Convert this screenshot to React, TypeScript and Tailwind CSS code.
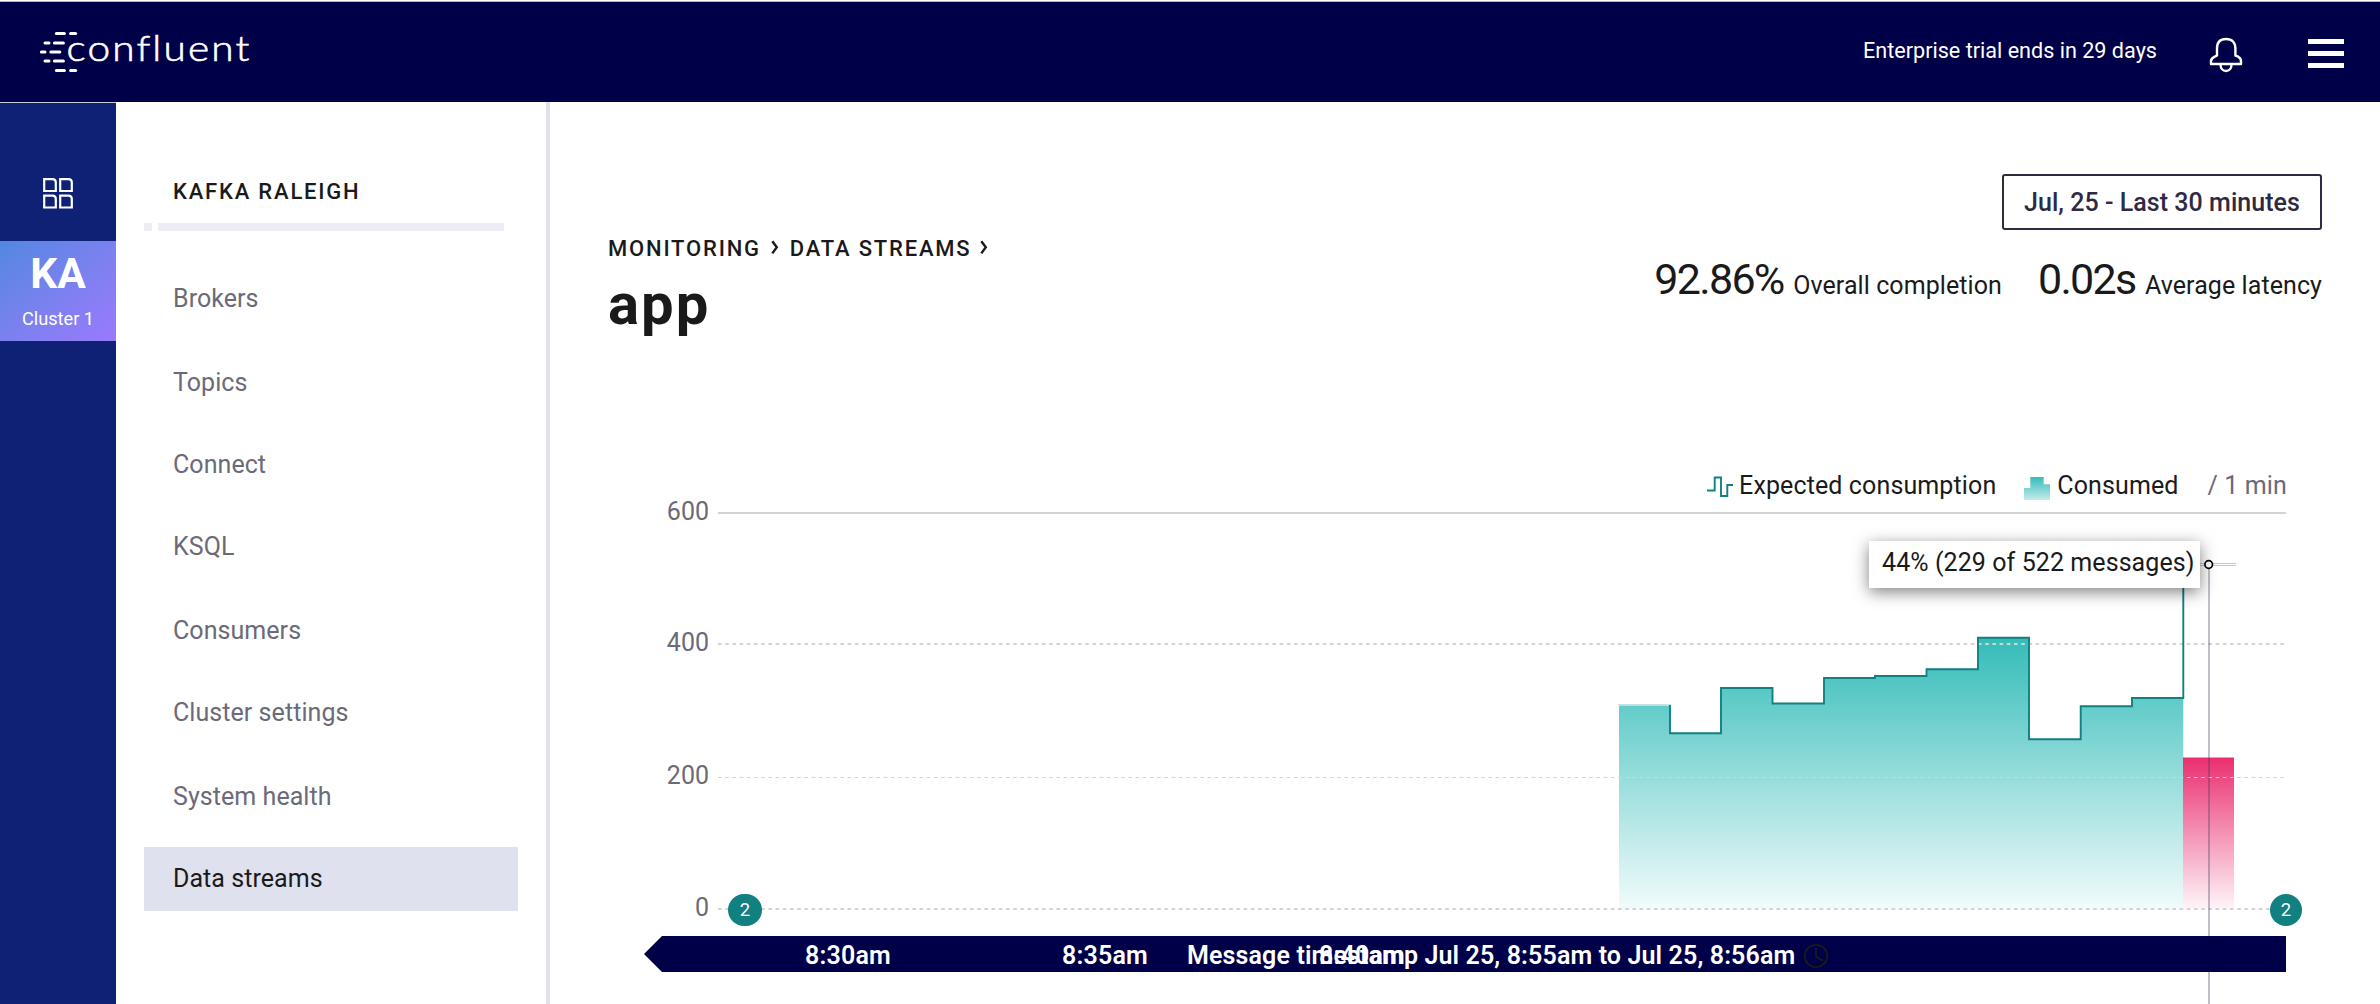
import type { ReactNode } from "react";

const NAV = [
  { label: "Brokers", gap: "mt-9" },
  { label: "Topics", gap: "mt-5" },
  { label: "Connect", gap: "mt-[18px]" },
  { label: "KSQL", gap: "mt-[18px]" },
  { label: "Consumers", gap: "mt-5" },
  { label: "Cluster settings", gap: "mt-[18px]" },
  { label: "System health", gap: "mt-5" },
  { label: "Data streams", gap: "mt-[18px]", active: true },
];

function Logo() {
  const dashes: [number, number, number][] = [
    [56.4, 64.4, 33.4], [70.6, 75.6, 33.4],
    [45, 49, 43], [54.4, 63.4, 43],
    [41.4, 45, 52], [50.8, 59.8, 52],
    [45, 49, 61], [54.4, 63.4, 61],
    [56.4, 64.4, 70.6], [70.6, 75.6, 70.6],
  ];
  return (
    <svg width="222" height="46" viewBox="38 29 222 46" className="overflow-visible" aria-label="confluent">
      {dashes.map(([a, b, y], i) => (
        <line key={i} x1={a} x2={b} y1={y} y2={y} stroke="#fff" strokeWidth="3" strokeLinecap="round" />
      ))}
      <text
        transform="translate(66.5 61) scale(1.16 1)"
        fill="#fff"
        stroke="#fff"
        strokeWidth="0.6"
        letterSpacing="1.85"
        className="font-[Lato,sans-serif] text-[35px] font-light [font-variant-ligatures:none]"
      >
        confluent
      </text>
    </svg>
  );
}

function BellIcon() {
  return (
    <svg width="34" height="36" viewBox="0 0 34 36" fill="none" stroke="#fff" strokeWidth="2.4" strokeLinejoin="round">
      <path d="M8 18.5V11.5C8 5.5 11 2 17 2s9.400 3.500 9.400 9.500V18.500C28.500 19.200 32 20.500 32 24v3H2v-3C2 20.500 6 19.800 8 18.500Z" />
      <path d="M11.500 27.500C11.500 31.500 14 34 17 34s5.500-2.500 5.500-6.500" />
    </svg>
  );
}

function GridIcon() {
  return (
    <svg width="31" height="31" viewBox="0 0 31 31" fill="none" stroke="#fff" strokeWidth="2.200">
      {[[0, 0], [16, 0], [0, 16.500], [16, 16.500]].map(([x, y], i) => (
        <path key={i} transform={`translate(${x} ${y})`} d="M1.200 1.200H9.500Q12.800 1.400 12.800 4.500V13H1.200Z" />
      ))}
    </svg>
  );
}

function Chevron() {
  return (
    <svg width="8" height="15" viewBox="0 0 8 15" className="mt-1" fill="none" stroke="#1a1a1a" strokeWidth="2.400">
      <path d="M1.300 1.200L5.800 7.300L1.300 13.400" />
    </svg>
  );
}

function Header() {
  return (
    <header className="flex h-[102px] items-start justify-between border-t border-white bg-[#000048] shadow-[inset_0_1px_0_#b4b9c0]">
      <div className="pt-7 pl-[38px]">
        <Logo />
      </div>
      <div className="flex items-start pr-9">
        <span className="mt-[37px] text-[21.6px] leading-[26px] text-white">Enterprise trial ends in 29 days</span>
        <div className="mt-9 ml-[52px]">
          <BellIcon />
        </div>
        <div className="mt-[38px] ml-[65px] flex w-9 flex-col gap-[7px]">
          <div className="h-[5px] bg-white" />
          <div className="h-[5px] bg-white" />
          <div className="h-[5px] bg-white" />
        </div>
      </div>
    </header>
  );
}

function Rail() {
  return (
    <div className="flex w-[116px] shrink-0 flex-col border-t border-[#c5cadb] bg-[#0f2175]">
      <div className="flex justify-center pt-[75px]">
        <GridIcon />
      </div>
      <div className="mt-8 flex h-[100px] flex-col items-center bg-linear-to-br from-[#5187e1] to-[#9a79fd] text-white">
        <span className="mt-2 text-[42.5px] leading-[50px] font-bold">KA</span>
        <span className="mt-[9px] text-[18.2px] leading-[22px]">Cluster 1</span>
      </div>
    </div>
  );
}

function Sidebar() {
  return (
    <aside className="w-[434px] shrink-0 border-r-4 border-[#dfe1ee] pt-[77px] pl-7">
      <h2 className="ml-[29px] text-[22px] leading-[25px] font-medium tracking-[1.8px] text-[#1a1a1a]">KAFKA RALEIGH</h2>
      <div className="mt-[19px] flex gap-1.5">
        <div className="h-2 w-2 bg-[#edeef5]" />
        <div className="h-2 w-[346px] bg-[#edeef5]" />
      </div>
      <nav className="w-[374px]">
        {NAV.map((n) => (
          <a
            key={n.label}
            className={`${n.gap} block h-16 pl-[29px] text-[25px] leading-[63px] tracking-[0.06px] ${
              n.active ? "bg-[#dfe1ee] text-[#1a1a1a]" : "text-[#6b6a78]"
            }`}
          >
            {n.label}
          </a>
        ))}
      </nav>
    </aside>
  );
}

function Stat({ value, children }: { value: string; children: ReactNode }) {
  return (
    <div className="flex items-baseline gap-[9.500px]">
      <span className="text-[43px] leading-[50px] tracking-[-1.700px]">{value}</span>
      <span className="text-[25px] leading-[29px] tracking-[0.080px]">{children}</span>
    </div>
  );
}

function PageHead() {
  return (
    <div className="flex h-[369px] items-start justify-between pr-[58px] pl-[58px] text-[#1a1a1a]">
      <div className="pt-[134px]">
        <div className="flex text-[22px] leading-[25px] font-medium tracking-[1.8px]">
          <span>MONITORING</span>
          <span className="ml-2.5"><Chevron /></span>
          <span className="ml-[11px]">DATA STREAMS</span>
          <span className="ml-[9px]"><Chevron /></span>
        </div>
        <h1 className="mt-[9px] text-[58px] leading-[68px] font-bold tracking-[2px]">app</h1>
      </div>
      <div className="flex flex-col items-end pt-[72px]">
        <button className="h-14 w-80 rounded-[3px] border-2 border-[#2f2a42] text-[25px] leading-[54px] font-medium tracking-[0.040px] text-[#2f2a42]">
          Jul, 25 - Last 30 minutes
        </button>
        <div className="mt-6 flex items-baseline gap-9">
          <Stat value="92.86%">Overall completion</Stat>
          <Stat value="0.02s">Average latency</Stat>
        </div>
      </div>
    </div>
  );
}

function Legend() {
  return (
    <div className="flex h-[29px] justify-end pr-[93px] text-[25px] leading-[29px] tracking-[0.12px] text-[#1a1a1a]">
      <svg width="26" height="21" viewBox="0 0 26 21" className="mt-[5px] mr-1.5" fill="none" stroke="#128080" strokeWidth="1.900">
        <path d="M0 14.500H7.700V1.500H14V20H20.300V9H26" />
      </svg>
      <span className="mr-7">Expected consumption</span>
      <svg width="26" height="23" viewBox="0 0 26 23" className="mt-1.5 mr-[7px]">
        <defs>
          <linearGradient id="legendFill" x1="0" y1="0" x2="0" y2="1">
            <stop offset="0" stopColor="#34bcb9" />
            <stop offset="1" stopColor="#c4ebea" />
          </linearGradient>
        </defs>
        <path d="M0 11H6.300V0H19.700V7.300H26V23H0Z" fill="url(#legendFill)" />
      </svg>
      <span className="mr-[29px]">Consumed</span>
      <span className="text-[#6b6878]">/ 1 min</span>
    </div>
  );
}

const STEP_X = [1619, 1670, 1721, 1772.5, 1824, 1875, 1926.5, 1978, 2029, 2080.7, 2132, 2183.3];
const STEP_Y = [705.5, 733.3, 688, 703.5, 678, 676, 669.3, 637.7, 739.3, 706.3, 698];

function areaPath() {
  let d = `M${STEP_X[0]} 909`;
  STEP_Y.forEach((y, i) => {
    d += `L${STEP_X[i]} ${y}L${STEP_X[i + 1]} ${y}`;
  });
  return `${d}L${STEP_X[STEP_X.length - 1]} 909Z`;
}

function outlinePath() {
  let d = `M${STEP_X[1]} 705`;
  STEP_Y.slice(1).forEach((y, i) => {
    d += `L${STEP_X[i + 1]} ${y}L${STEP_X[i + 2]} ${y}`;
  });
  return `${d}V564`;
}

function Badge({ x, w }: { x: number; w: number }) {
  return (
    <g>
      <rect x={x - w / 2} y="894" width={w} height="32" rx="16" fill="#128080" />
      <text x={x} y="916" textAnchor="middle" fill="#fff" fontSize="18.500">2</text>
    </g>
  );
}

function Chart() {
  return (
    <div className="relative ml-[90px] h-[504px] w-[1670px]">
      <svg width="1670" height="504" viewBox="640 500 1670 504" className="block overflow-visible font-[Roboto,sans-serif]">
        <defs>
          <linearGradient id="consumed" gradientUnits="userSpaceOnUse" x1="0" y1="638" x2="0" y2="909">
            <stop offset="0" stopColor="#34bcb9" />
            <stop offset="0.500" stopColor="#94dcda" />
            <stop offset="1" stopColor="#f2fbfb" />
          </linearGradient>
          <linearGradient id="missed" gradientUnits="userSpaceOnUse" x1="0" y1="757" x2="0" y2="909">
            <stop offset="0" stopColor="#ea2e6f" />
            <stop offset="1" stopColor="#fef5f9" />
          </linearGradient>
        </defs>

        <path d={areaPath()} fill="url(#consumed)" />
        <rect x="1618" y="704" width="53" height="1" fill="#c5e3e3" />
        <rect x="2183" y="757.500" width="51" height="151.500" fill="url(#missed)" />

        <rect x="718" y="512" width="1568" height="2" fill="#d3d3d3" />
        <g stroke="#d3d3d3" strokeDasharray="3.600 3.600">
          <line x1="718" x2="2286" y1="644" y2="644" strokeWidth="2" />
          <line x1="718" x2="2286" y1="777.500" y2="777.500" strokeWidth="1" />
          <line x1="718" x2="2286" y1="909" y2="909" strokeWidth="2" />
        </g>
        <path d={outlinePath()} fill="none" stroke="#128080" strokeWidth="1.900" />

        <g fill="#6b6a78" fontSize="25" textAnchor="end">
          <text x="709" y="520">600</text>
          <text x="709" y="651">400</text>
          <text x="709" y="784">200</text>
          <text x="709" y="916">0</text>
        </g>

        <rect x="2200" y="563" width="36" height="1" fill="#c8c3cc" />
        <rect x="2200" y="565" width="36" height="1" fill="#c8c3cc" />
        <rect x="2208" y="568" width="2" height="436" fill="#3b3550" fillOpacity="0.320" />
        <circle cx="2208.700" cy="564.500" r="3.800" fill="#fff" stroke="#000" strokeWidth="1.700" />

        <Badge x={745} w={34} />
        <Badge x={2286} w={32} />

        <path d="M644 954L662 936H2286V972H662Z" fill="#000048" />
        <g fill="#fff" fontSize="25" fontWeight="600" letterSpacing="0.200" textAnchor="middle">
          <text x="848" y="964">8:30am</text>
          <text x="1105" y="964">8:35am</text>
          <text x="1362" y="964">8:40am</text>
        </g>
        <text x="1187" y="964" fill="#fff" fontSize="25" fontWeight="600" letterSpacing="0.130">
          Message timestamp Jul 25, 8:55am to Jul 25, 8:56am
        </text>
        <g fill="none" stroke="#1a1a1a" strokeWidth="1.800">
          <circle cx="1816" cy="956" r="11.200" />
          <path d="M1816 948V956.500L1823 961" />
        </g>
      </svg>
      <div className="absolute top-[41px] left-[1229px] h-[47px] w-[331px] bg-white pl-[13px] text-[25px] leading-[43px] tracking-[0.08px] whitespace-nowrap text-[#1a1a1a] shadow-[0_4px_16px_rgba(0,0,0,0.5)]">
        44% (229 of 522 messages)
      </div>
    </div>
  );
}

export default function App() {
  return (
    <div className="flex h-[1004px] w-[2380px] flex-col overflow-hidden bg-white font-[Roboto,sans-serif]">
      <Header />
      <div className="flex flex-1">
        <Rail />
        <Sidebar />
        <main className="flex-1">
          <PageHead />
          <Legend />
          <Chart />
        </main>
      </div>
    </div>
  );
}
